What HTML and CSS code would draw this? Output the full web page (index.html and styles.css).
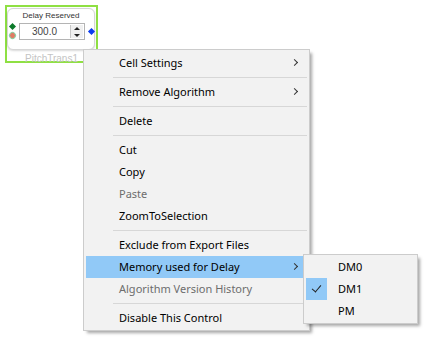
FILE: index.html
```html
<!DOCTYPE html>
<html lang="en">
<head>
  <meta charset="UTF-8">
  <title>Context Menu</title>
  <link rel="stylesheet" href="styles.css">
</head>
<body>
  <div class="canvas">
    <div class="block selected">
      <div class="card">
        <div class="card-title">Delay Reserved</div>
        <div class="card-row">
          <div class="pins">
            <span class="pin pin-green"></span>
            <span class="pin pin-red"></span>
          </div>
          <div class="spin">
            <span class="spin-value">300.0</span>
            <span class="spin-btns">
              <span class="spin-up"></span>
              <span class="spin-down"></span>
            </span>
          </div>
          <span class="pin pin-blue"></span>
        </div>
      </div>
      <div class="block-name">PitchTrans1</div>
    </div>

    <div class="menu">
      <div class="item">Cell Settings<span class="arrow"></span></div>
      <div class="sep"></div>
      <div class="item">Remove Algorithm<span class="arrow"></span></div>
      <div class="sep"></div>
      <div class="item">Delete</div>
      <div class="sep"></div>
      <div class="item">Cut</div>
      <div class="item">Copy</div>
      <div class="item disabled">Paste</div>
      <div class="item">ZoomToSelection</div>
      <div class="sep"></div>
      <div class="item">Exclude from Export Files</div>
      <div class="item active">Memory used for Delay<span class="arrow"></span></div>
      <div class="item disabled">Algorithm Version History</div>
      <div class="sep"></div>
      <div class="item">Disable This Control</div>
    </div>

    <div class="menu submenu">
      <div class="item">DM0</div>
      <div class="item checked"><span class="check"></span>DM1</div>
      <div class="item">PM</div>
    </div>
  </div>
</body>
</html>
```

FILE: styles.css
```css
body {
  margin: 0;
  padding: 0;
  background: #ffffff;
  font-family: "Noto Sans", "Open Sans", sans-serif;
}
.canvas {
  position: relative;
  width: 431px;
  height: 342px;
  overflow: hidden;
}

/* block on the canvas */
.block {
  position: absolute;
  left: 5px;
  top: 5px;
  width: 93px;
  height: 58px;
  box-sizing: border-box;
  border: 2px solid #8fe043;
}
.card {
  margin: 1px 0 0 0;
  width: 88px;
  height: 42px;
  box-sizing: border-box;
  background: #fff;
  border: 1px solid #d6d6d6;
  border-radius: 6px;
  box-shadow: 0 1px 2px rgba(0,0,0,0.15);
}
.card-title {
  text-align: center;
  font-family: "Liberation Sans", sans-serif;
  font-size: 8px;
  color: #333;
  margin-top: 2px;
  line-height: 10px;
}
.card-row {
  display: flex;
  align-items: center;
  margin-top: 2px;
}
.pins {
  display: flex;
  flex-direction: column;
  gap: 4px;
  width: 10px;
  align-items: center;
  margin-top: -2px;
}
.pin {
  width: 5px;
  height: 5px;
  transform: rotate(45deg);
  display: block;
}
.pin-green { background: #0b7a2a; }
.pin-red {
  background: #e07b65;
  border-radius: 50%;
  box-shadow: 0 0 0 1px #8fd3a8;
}
.pin-blue {
  background: #0a3cf0;
  margin-left: 4px;
}
.spin {
  display: flex;
  width: 67px;
  height: 17px;
  box-sizing: border-box;
  border: 1px solid #b4b4b4;
  margin-left: 1px;
}
.spin-value {
  flex: 1;
  text-align: center;
  font-family: "Liberation Sans", sans-serif;
  font-size: 10px;
  line-height: 15px;
  color: #444;
}
.spin-btns {
  width: 12px;
  display: flex;
  flex-direction: column;
  border-left: 1px solid #c8c8c8;
  background: #f0f0f0;
  margin: 1px;
}
.spin-up, .spin-down {
  flex: 1;
  position: relative;
}
.spin-up::after, .spin-down::after {
  content: "";
  position: absolute;
  left: 3px;
  border-left: 3px solid transparent;
  border-right: 3px solid transparent;
}
.spin-up::after { top: 2px; border-bottom: 3px solid #222; }
.spin-down::after { top: 2px; border-top: 3px solid #222; }
.block-name {
  text-align: center;
  font-family: "Liberation Sans", sans-serif;
  font-size: 10px;
  color: #c4c4c4;
  margin-top: 4px;
  line-height: 10px;
}

/* context menu */
.menu {
  position: absolute;
  left: 83px;
  top: 49px;
  width: 227px;
  box-sizing: border-box;
  background: #f2f2f2;
  border: 1px solid #cccccc;
  padding: 2px 2px 1px 2px;
  box-shadow: 3px 3px 3px -1px rgba(0,0,0,0.35);
  font-size: 11px;
  color: #000;
}
.item {
  position: relative;
  height: 22px;
  line-height: 22px;
  padding-left: 33px;
  white-space: nowrap;
}
.item.disabled { color: #6d6d6d; }
.item.active { background: #91c9f7; }
.arrow {
  position: absolute;
  right: 10px;
  top: 8px;
  width: 4px;
  height: 4px;
  border-top: 1px solid #333;
  border-right: 1px solid #333;
  transform: rotate(45deg);
}
.sep {
  height: 1px;
  background: #d7d7d7;
  margin: 3px 0 3px 27px;
}
.submenu {
  left: 303px;
  top: 254px;
  width: 115px;
  padding: 1px;
}
.check {
  position: absolute;
  left: 1px;
  top: 0;
  width: 21px;
  height: 22px;
  background: #91c9f7;
}
.check::after {
  content: "";
  position: absolute;
  left: 8px;
  top: 5px;
  width: 4px;
  height: 8px;
  border-right: 1px solid #222;
  border-bottom: 1px solid #222;
  transform: rotate(40deg);
}
```
